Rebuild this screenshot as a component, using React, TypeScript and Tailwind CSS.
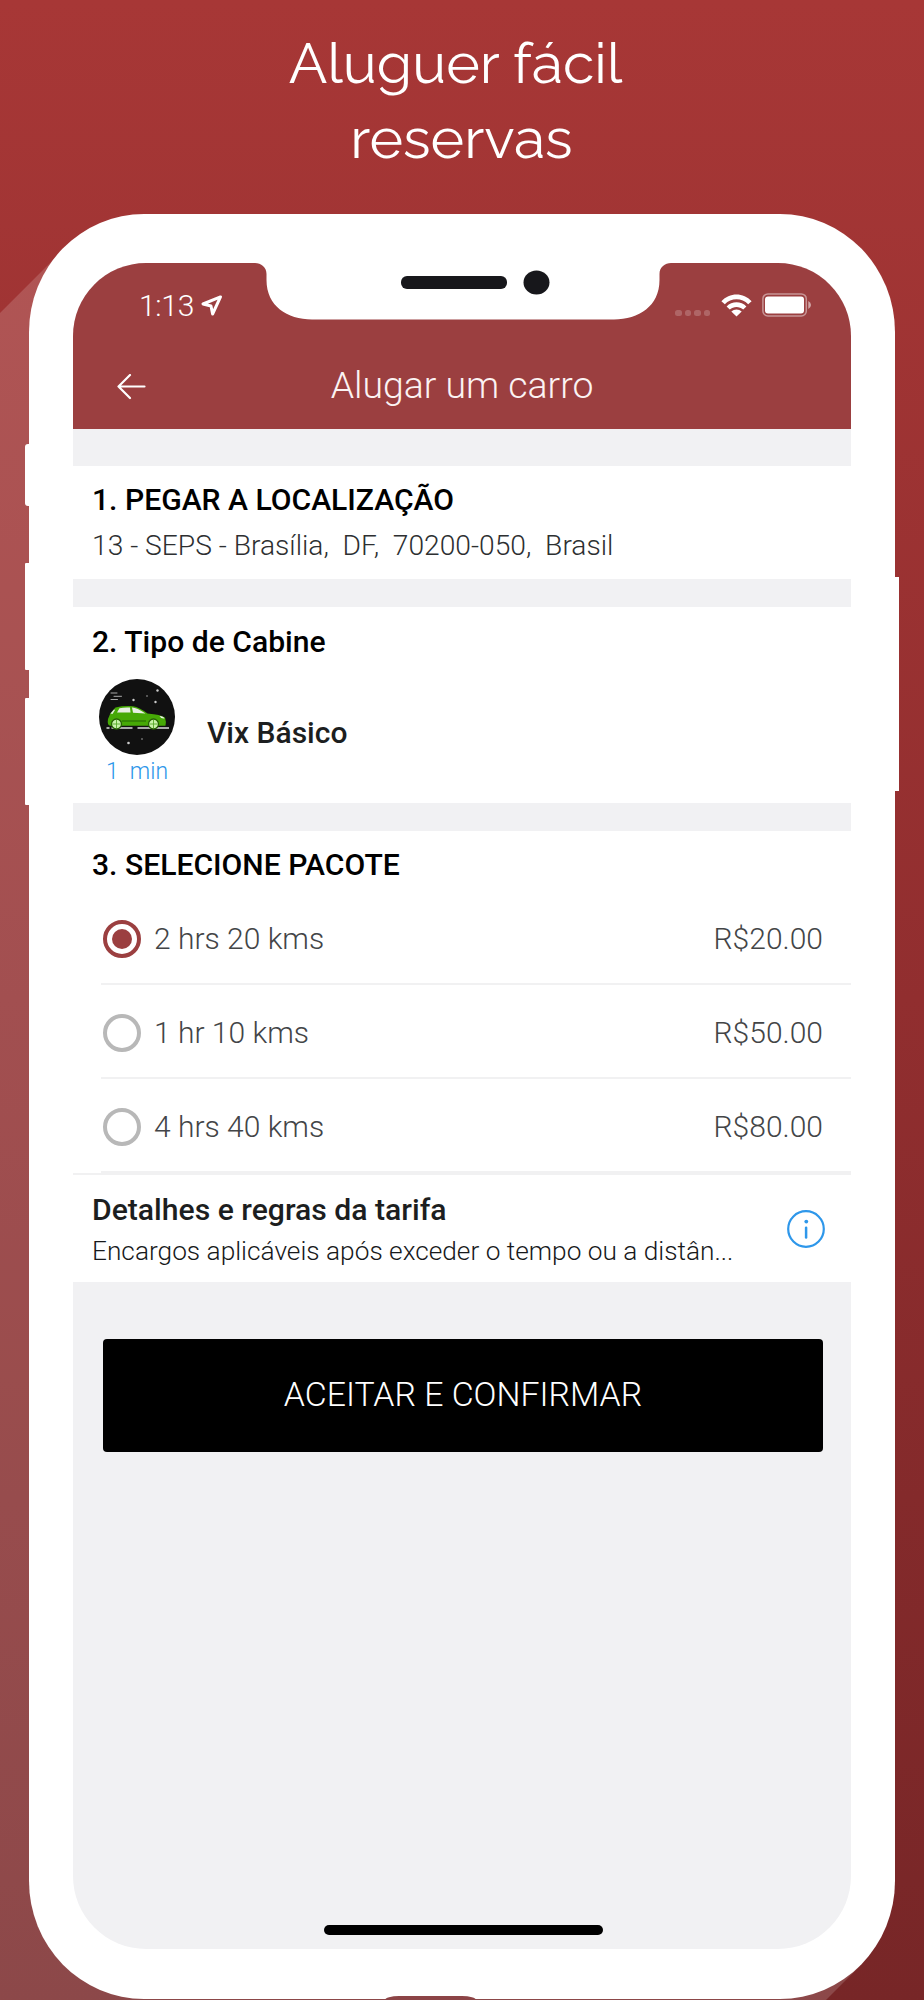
import React, { useState } from 'react';

interface RentalPackage {
    id: number;
    label: string;
    price: string;
}

const packages: RentalPackage[] = [
    { id: 1, label: '2 hrs 20 kms', price: 'R$20.00' },
    { id: 2, label: '1 hr 10 kms', price: 'R$50.00' },
    { id: 3, label: '4 hrs 40 kms', price: 'R$80.00' },
];

// Long shadow that the phone casts on the red backdrop
const LongShadow: React.FC = () => (
    <svg className="absolute inset-0" width="924" height="2000" viewBox="0 0 924 2000">
        <path d="M0 313 L55 258 L100 400 L800 1900 L860 1966 L826 2000 H0 Z" fill="#fff" fillOpacity="0.16" />
    </svg>
);

const Notch: React.FC = () => (
    <svg className="absolute top-[-1px] left-[182px]" width="416" height="60" viewBox="0 0 416 60">
        <path d="M0 0 V1 C6 1 11.500 5 11.500 12 V18 C11.500 44 32 57.500 57 57.500 H359 C384 57.500 404.500 44 404.500 18 V12 C404.500 5 410 1 416 1 V0 Z" fill="#fff" />
        <rect x="146" y="14" width="106" height="13" rx="6" fill="#17171b" />
        <ellipse cx="281.500" cy="20.500" rx="13" ry="12" fill="#17171b" />
    </svg>
);

const LocationArrow: React.FC = () => (
    <svg width="22" height="22" viewBox="0 0 22 22" fill="none" stroke="#fff" strokeWidth="3" strokeLinejoin="round">
        <path d="M19.500 1.900 L2 9 L10 11 L11.600 19 Z" />
    </svg>
);

const WifiIcon: React.FC = () => (
    <svg width="31" height="23" viewBox="0 0 31 23">
        <path d="M.4 7.200 C8.500 -1.800 22.500 -1.800 30.600 7.200 L27.200 10.200 C21 3.600 10 3.600 3.800 10.200 Z" fill="#fff" />
        <path d="M5.600 12.400 C11 6.800 20 6.800 25.400 12.400 L22.200 15.600 C18.600 12 12.400 12 8.800 15.600 Z" fill="#fff" />
        <path d="M10.300 17.500 C13.300 14.700 17.700 14.700 20.700 17.500 L15.500 22.600 Z" fill="#fff" />
    </svg>
);

const BatteryIcon: React.FC = () => (
    <svg width="50" height="24" viewBox="0 0 50 24">
        <rect x=".9" y=".9" width="43.400" height="22" rx="5" fill="none" stroke="#fff" strokeOpacity=".45" strokeWidth="1.500" />
        <rect x="3" y="3.500" width="39" height="17" rx="3" fill="#fff" />
        <path d="M46.300 8 Q49 9.500 49 12 Q49 14.500 46.300 16 Z" fill="#fff" fillOpacity=".55" />
    </svg>
);

const CarIcon: React.FC = () => (
    <svg width="76" height="76" viewBox="0 0 76 76">
        <circle cx="38" cy="38" r="38" fill="#111" />
        <g stroke="#aaa" strokeWidth="1" strokeLinecap="round">
            <path d="M12 14 H18 M15 17.300 H22.500 M12 20.500 H18.500" />
        </g>
        <g fill="#ccc">
            <circle cx="58.500" cy="11.500" r="1.200" />
            <circle cx="48" cy="17" r=".7" />
            <circle cx="34.500" cy="21" r="1.200" />
            <circle cx="56.500" cy="23" r="1.200" />
            <circle cx="29.500" cy="64" r="1.300" />
            <circle cx="43" cy="60" r=".7" />
        </g>
        <path d="M7.500 49 H10.500 M12.500 49 H33.500 M38.500 49 H70" stroke="#ddd" strokeWidth="1.500" />
        <path d="M9 40 L11.500 34 L16.500 28.500 Q24 26.700 34 27.200 Q40 28 48.500 34.500 Q62 35.500 66 38.500 Q67.500 43 66.500 46.800 H11 Q8 46 9 40 Z" fill="#46a906" />
        <path d="M18 33.500 L20.500 29.200 Q25 28.200 31 28.500 L31.500 33.500 Z M33 28.500 Q38 28.500 46.500 34.500 L34 33.700 Z M11.500 34.500 L15 30.500 L16 31 L13.500 35 Z" fill="#e8efe4" />
        <path d="M60.500 37 Q64.500 37 65.500 39.500 Q62 40 60.500 37 Z" fill="#eee" />
        <path d="M23 42 H47" stroke="#2b7204" strokeWidth="1.200" />
        <g fill="#c9f3aa" stroke="#276304" strokeWidth="1.300">
            <circle cx="17.500" cy="45" r="5" />
            <circle cx="54.500" cy="45" r="5" />
        </g>
        <path d="M17.500 41 V49 M13.500 45 H21.500 M54.500 41 V49 M50.500 45 H58.500" stroke="#58a92a" strokeWidth=".9" />
    </svg>
);

const InfoIcon: React.FC = () => (
    <svg width="38" height="38" viewBox="0 0 38 38">
        <circle cx="19" cy="19" r="17.800" fill="none" stroke="#2e97ea" strokeWidth="2.200" />
        <circle cx="19.300" cy="11.600" r="1.900" fill="#2e97ea" />
        <path d="M19.100 17.800 V27.400" stroke="#2e97ea" strokeWidth="2.500" strokeLinecap="round" />
    </svg>
);

const StatusBar: React.FC = () => (
    <div className="flex h-[86px] items-start justify-between pr-[39px] pl-[66px] pt-[25px]">
        <div className="flex items-center gap-[7px]">
            <span className="text-[30px] leading-[36px] font-light tracking-[-0.3px] text-white">1:13</span>
            <LocationArrow />
        </div>
        <div className="flex h-[34px] items-center">
            <div className="mt-[16px] mr-[11px] flex gap-[3px]">
                {[0, 1, 2, 3].map((i) => (
                    <span key={i} className="size-[6.500px] rounded-[2.500px] bg-white/20" />
                ))}
            </div>
            <WifiIcon />
            <div className="ml-[10px]">
                <BatteryIcon />
            </div>
        </div>
    </div>
);

const App: React.FC = () => {
    const [selected, setSelected] = useState(1);

    return (
        <div className="relative h-[2000px] w-[924px] overflow-hidden bg-linear-to-b from-[#a73736] via-[#912e2f] to-[#772627] font-['Roboto',sans-serif]">
            <LongShadow />

            <h1 className="relative pt-[25px] pr-[13px] text-center font-['Raleway','Lato',sans-serif] text-[57.200px] leading-[75px] font-normal text-white">
                Aluguer fácil
                <br />
                <span className="relative left-[6px]">reservas</span>
            </h1>

            {/* Phone body */}
            <div className="relative mt-[39px] ml-[29px] h-[1785px] w-[866px] rounded-[115px/118px] bg-white px-[44px] pt-[49px]">
                <div className="absolute top-[230px] left-[-4px] h-[62px] w-[6px] rounded-l-[3px] bg-white" />
                <div className="absolute top-[349px] left-[-4px] h-[107px] w-[6px] rounded-l-[1px] bg-white" />
                <div className="absolute top-[484px] left-[-4px] h-[107px] w-[6px] rounded-l-[1px] bg-white" />
                <div className="absolute top-[363px] right-[-4px] h-[214px] w-[6px] bg-white" />

                {/* Screen */}
                <div className="relative flex h-[1686px] w-[778px] flex-col overflow-hidden rounded-[73px] bg-[#f1f1f3]">
                    <header className="h-[166px] shrink-0 bg-[#9b3f40]">
                        <StatusBar />
                        <div className="relative flex h-[76px] items-center justify-center">
                            <button className="absolute left-[44px]" aria-label="Voltar">
                                <svg width="29" height="26" viewBox="0 0 29 26" fill="none" stroke="#fff" strokeWidth="2.200" strokeLinecap="round" strokeLinejoin="round">
                                    <path d="M13 1 L1.500 12.500 L13 24 M1.500 12.500 H27.500" />
                                </svg>
                            </button>
                            <h2 className="pb-[4px] text-[37.400px] leading-[44px] font-light text-[#fbf3f3]">Alugar um carro</h2>
                        </div>
                    </header>
                    <Notch />

                    <section className="mt-[37px] h-[113px] shrink-0 bg-white pt-[16px] pl-[19px]">
                        <h3 className="text-[30.100px] leading-[36px] font-medium text-black">1. PEGAR A LOCALIZAÇÃO</h3>
                        <p className="mt-[10px] text-[28.200px] leading-[36px] font-light whitespace-pre text-[#2d2f31]">13 - SEPS - Brasília,  DF,  70200-050,  Brasil</p>
                    </section>

                    <section className="mt-[28px] h-[196px] shrink-0 bg-white pt-[17px] pl-[19px]">
                        <h3 className="text-[30.100px] leading-[36px] font-medium text-black">2. Tipo de Cabine</h3>
                        <div className="mt-[19px] flex">
                            <div className="ml-[7px] flex w-[76px] flex-col items-center">
                                <CarIcon />
                                <span className="mt-[3px] text-[23px] leading-[28px] font-light whitespace-pre text-[#2e97ea]">1  min</span>
                            </div>
                            <span className="mt-[36px] ml-[32px] text-[30px] leading-[36px] font-medium text-[#1c1e20]">Vix Básico</span>
                        </div>
                    </section>

                    <section className="mt-[28px] h-[342px] shrink-0 bg-white pt-[16px]">
                        <h3 className="pl-[19px] text-[30.100px] leading-[36px] font-medium text-black">3. SELECIONE PACOTE</h3>
                        <div className="mt-[8px] ml-[28px]">
                            {packages.map((item) => (
                                <div
                                    key={item.id}
                                    onClick={() => setSelected(item.id)}
                                    className="flex h-[94px] items-center border-b-2 border-[#f1f1f2] pt-[3px] pr-[28px] pl-[2px]"
                                >
                                    <span
                                        className={`flex size-[38px] items-center justify-center rounded-full border-[4px] ${
                                            selected === item.id ? 'border-[#9b3f40]' : 'border-[#b8b8b8]'
                                        }`}
                                    >
                                        {selected === item.id && <span className="size-[20px] rounded-full bg-[#9b3f40]" />}
                                    </span>
                                    <span className="ml-[13px] text-[30px] leading-[36px] font-light text-[#434547]">{item.label}</span>
                                    <span className="ml-auto text-[30px] leading-[36px] font-light text-[#434547]">{item.price}</span>
                                </div>
                            ))}
                        </div>
                    </section>

                    <section className="flex h-[109px] shrink-0 items-center justify-between border-t-2 border-[#f1f1f2] bg-white pr-[26px] pl-[19px]">
                        <div className="pt-[3px]">
                            <h3 className="text-[30.150px] leading-[36px] font-medium text-[#1c1e20]">Detalhes e regras da tarifa</h3>
                            <p className="mt-[5px] text-[26.250px] leading-[36px] font-light text-[#17191b]">Encargos aplicáveis após exceder o tempo ou a distân...</p>
                        </div>
                        <InfoIcon />
                    </section>

                    <button className="mt-[57px] mr-[28px] ml-[30px] h-[113px] shrink-0 rounded-[4px] bg-black text-[33.800px] font-light text-white">
                        ACEITAR E CONFIRMAR
                    </button>

                    <div className="mt-auto mb-[14px] ml-[251px] h-[10px] w-[279px] shrink-0 rounded-full bg-black" />
                </div>

                <div className="absolute bottom-[-1px] left-[356px] h-[4px] w-[91px] rounded-t-[14px_4px] bg-[#8c4446]" />
            </div>
        </div>
    );
};

export default App;
